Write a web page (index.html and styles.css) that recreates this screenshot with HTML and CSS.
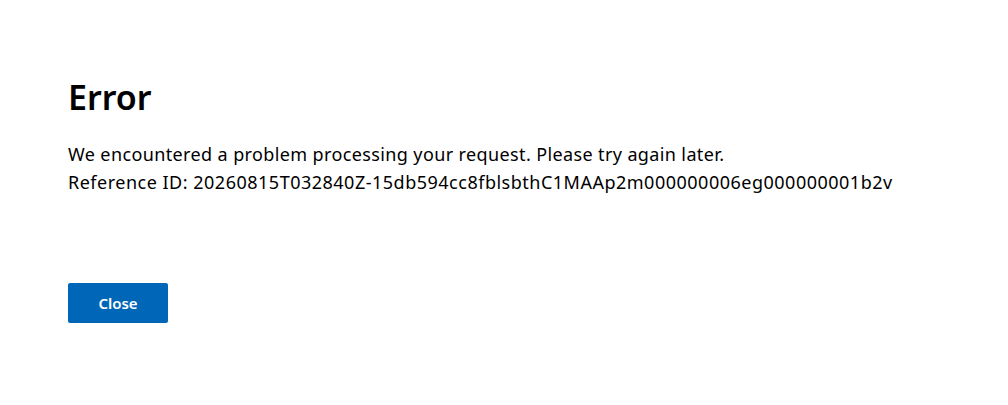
FILE: index.html
```html
<!DOCTYPE html>
<html lang="en">
<head>
<meta charset="utf-8">
<title>Error</title>
<link rel="stylesheet" href="styles.css">
</head>
<body>
<main class="page">
  <h1 class="title">Error</h1>
  <div class="message">
    <p>We encountered a problem processing your request. Please try again later.</p>
    <p class="ref-id">Reference ID: 20260815T032840Z-15db594cc8fblsbthC1MAAp2m000000006eg000000001b2v</p>
  </div>
  <button class="close-btn" type="button">Close</button>
</main>
</body>
</html>
```

FILE: styles.css
```css
html, body {
  margin: 0;
  padding: 0;
  background: #ffffff;
}
body {
  font-family: "Noto Sans", "Open Sans", sans-serif;
  color: #000000;
}
.page {
  padding: 72px 68px 0 68px;
  display: flex;
  flex-direction: column;
  align-items: flex-start;
}
.title {
  margin: 0;
  font-size: 34px;
  font-weight: 600;
  line-height: 50px;
}
.message {
  margin-top: 18px;
  font-size: 18px;
  letter-spacing: 0.38px;
  line-height: 28px;
}
.message p {
  margin: 0;
}
.message .ref-id {
  letter-spacing: 0.5px;
}
.close-btn {
  margin-top: 87px;
  width: 100px;
  height: 40px;
  border: none;
  border-radius: 2px;
  background: #0067b8;
  color: #ffffff;
  font-family: "Noto Sans", "Open Sans", sans-serif;
  font-size: 15px;
  font-weight: 600;
  cursor: pointer;
}
```
